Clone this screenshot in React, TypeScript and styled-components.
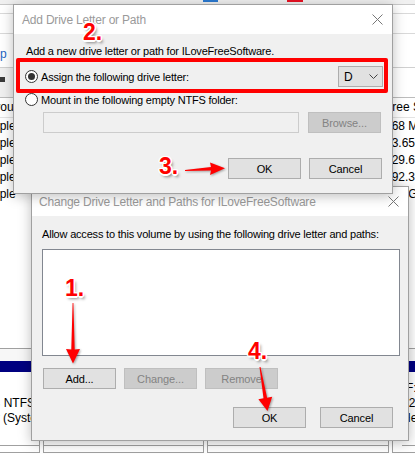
import React from "react";
import styled, { createGlobalStyle } from "styled-components";

const Global = createGlobalStyle`
  *, *::before, *::after { box-sizing: border-box; }
  html, body { margin: 0; padding: 0; background: #fff; }
  body { font-family: "Liberation Sans", Arial, sans-serif; }
`;

const Page = styled.div`
  position: relative;
  width: 415px;
  height: 454px;
  overflow: hidden;
  background: #fff;
  display: flex;
  flex-direction: column;
  font-family: "Liberation Sans", Arial, sans-serif;
  font-size: 12px;
  color: #000;
`;

/* ---------- background: Disk Management window ---------- */
const ToolStrip = styled.div`
  flex: none;
  height: 5px;
  background: #f0f0f0;
  border-bottom: 1px solid #c8c8c8;
  display: flex;
  align-items: flex-start;
`;
const ToolStub = styled.span<{ $color: string; $w: number; $ml: number }>`
  width: ${(p) => p.$w}px;
  height: 2px;
  margin-left: ${(p) => p.$ml}px;
  background: ${(p) => p.$color};
`;
const MenuStrip = styled.div`
  flex: none;
  height: 9px;
  border-bottom: 1px solid #d9d9d9;
`;
const PaneA = styled.div`
  flex: none;
  height: 20px;
  border-bottom: 1px solid #d9d9d9;
`;
const PaneB = styled.div`
  flex: none;
  height: 34px;
  padding-top: 13px;
  border-bottom: 1px solid #d0d0d0;
  line-height: 15px;
  white-space: nowrap;
`;
const HelpLink = styled.span`
  margin-left: -18px;
  color: #1f66c2;
`;
const IconArea = styled.div`
  flex: none;
  height: 30px;
  display: flex;
  border-bottom: 1px solid #bcbcbc;
`;
const IconRail = styled.div`
  width: 14px;
  background: #f0f0f0;
  padding-top: 9px;
`;
const IconStub = styled.div`
  width: 5px;
  height: 5px;
  background: #3a3a3a;
`;
const Table = styled.div`
  flex: none;
  display: flex;
  flex-direction: column;
  margin-left: -21px;
`;
const TableRow = styled.div<{ $head?: boolean }>`
  display: grid;
  grid-template-columns: 406px 1fr;
  height: ${(p) => (p.$head ? 20 : 17)}px;
  line-height: ${(p) => (p.$head ? 19 : 17)}px;
  border-bottom: ${(p) => (p.$head ? "1px solid #e3e3e3" : "none")};
  white-space: nowrap;
`;
const Cell = styled.span<{ $pad?: number }>`
  padding-left: ${(p) => p.$pad ?? 0}px;
  overflow: hidden;
`;
const Filler = styled.div`
  flex: 1;
`;
const DiskArea = styled.div`
  flex: none;
  height: 106px;
  border-top: 1px solid #a0a0a0;
  display: flex;
  flex-direction: column;
`;
const DiskGap = styled.div`
  height: 12px;
  background: #f7f7f7;
`;
const NavyBar = styled.div`
  height: 11px;
  background: #000080;
`;
const PartRow = styled.div`
  flex: 1;
  display: flex;
  gap: 3px;
  margin-left: -42px;
  padding-bottom: 1px;
`;
const PartBox = styled.div<{ $w: number; $pad?: number }>`
  width: ${(p) => p.$w}px;
  flex: none;
  border: 1px solid #a0a0a0;
  border-top: none;
  display: flex;
  flex-direction: column;
  padding-top: 9px;
  padding-left: ${(p) => p.$pad ?? 0}px;
  line-height: 15px;
  white-space: nowrap;
  overflow: hidden;
`;
const PartFoot = styled.div`
  margin-top: auto;
  height: 7px;
  border-top: 1px solid #a0a0a0;
`;

/* ---------- dialogs ---------- */
const Window = styled.div<{ $x: number; $y: number; $w: number; $h: number }>`
  position: absolute;
  left: ${(p) => p.$x}px;
  top: ${(p) => p.$y}px;
  width: ${(p) => p.$w}px;
  height: ${(p) => p.$h}px;
  border: 1px solid #a0a0a0;
  box-shadow: 0 2px 12px rgba(0, 0, 0, 0.26);
  background: #f0f0f0;
  display: flex;
  flex-direction: column;
  font-size: 11px;
  letter-spacing: -0.2px;
  color: #000;
`;
const TitleBar = styled.div`
  flex: none;
  height: 29px;
  background: #fff;
  display: flex;
  align-items: center;
  justify-content: space-between;
`;
const Title = styled.span<{ $pad: number }>`
  padding-left: ${(p) => p.$pad}px;
  color: #9a9a9a;
  font-size: 12px;
  white-space: nowrap;
`;
const Close = styled.span`
  width: 30px;
  height: 29px;
  display: flex;
  align-items: center;
  justify-content: center;
`;
const Body = styled.div<{ $pad: string }>`
  flex: 1;
  padding: ${(p) => p.$pad};
  display: flex;
  flex-direction: column;
`;
const Label = styled.div<{ $ml?: number }>`
  line-height: 15px;
  height: 15px;
  margin-left: ${(p) => p.$ml ?? 0}px;
  white-space: nowrap;
`;
const Row = styled.div<{ $mt: number; $h: number; $justify?: string; $gap?: number; $pr?: number; $ml?: number }>`
  display: flex;
  align-items: center;
  margin-top: ${(p) => p.$mt}px;
  height: ${(p) => p.$h}px;
  justify-content: ${(p) => p.$justify ?? "flex-start"};
  gap: ${(p) => p.$gap ?? 0}px;
  padding-right: ${(p) => p.$pr ?? 0}px;
  margin-left: ${(p) => p.$ml ?? 0}px;
  white-space: nowrap;
`;
const Radio = styled.span<{ $checked?: boolean }>`
  flex: none;
  width: 13px;
  height: 13px;
  border-radius: 50%;
  border: 1px solid #333;
  background: #fff;
  margin-right: 3px;
  display: flex;
  align-items: center;
  justify-content: center;
  &::after {
    content: "";
    width: 7px;
    height: 7px;
    border-radius: 50%;
    background: #333;
    display: ${(p) => (p.$checked ? "block" : "none")};
  }
`;
const Combo = styled.div`
  margin-left: auto;
  margin-right: -1px;
  width: 45px;
  height: 21px;
  border: 1px solid #adadad;
  background: #e1e1e1;
  display: flex;
  align-items: center;
  justify-content: space-between;
  padding: 0 4px 0 5px;
  font-size: 12px;
`;
const Field = styled.div`
  width: 256px;
  height: 21px;
  margin-left: 18px;
  border: 1px solid #cccccc;
  background: #f0f0f0;
`;
const Button = styled.button`
  width: 73px;
  height: 21px;
  padding: 0;
  border: 1px solid #adadad;
  background: #e1e1e1;
  color: #000;
  font: inherit;
  font-size: 11px;
  letter-spacing: -0.1px;
  &:disabled {
    border-color: #bfbfbf;
    background: #cccccc;
    color: #838383;
  }
`;
const ListBox = styled.div`
  margin-top: 7px;
  height: 107px;
  border: 1px solid #828790;
  background: #fff;
`;

/* ---------- annotations ---------- */
const Highlight = styled.div`
  position: absolute;
  left: 16px;
  top: 58px;
  width: 372px;
  height: 35px;
  border: 4px solid #ff0000;
  border-radius: 2px;
`;
const Overlay = styled.svg`
  position: absolute;
  left: 0;
  top: 0;
  width: 415px;
  height: 454px;
  pointer-events: none;
  filter: drop-shadow(1px 1px 1px rgba(0, 0, 0, 0.35));
`;
const Step = styled.span<{ $x: number; $y: number }>`
  position: absolute;
  left: ${(p) => p.$x}px;
  top: ${(p) => p.$y}px;
  font-family: "Liberation Sans", Arial, sans-serif;
  font-weight: bold;
  font-size: 23px;
  line-height: 23px;
  color: #ff0000;
  text-shadow: -1.5px 0 0 #fff, 1.5px 0 0 #fff, 0 -1.5px 0 #fff, 0 1.5px 0 #fff,
    -1px -1px 0 #fff, 1px -1px 0 #fff, -1px 1px 0 #fff, 1px 1px 0 #fff,
    2px 3px 3px rgba(0, 0, 0, 0.45);
`;

const CloseIcon = () => (
  <svg width="11" height="11" viewBox="0 0 11 11">
    <path d="M0.5 0.5 L10.5 10.5 M10.5 0.5 L0.5 10.5" stroke="#777" strokeWidth="1" fill="none" />
  </svg>
);

const Chevron = () => (
  <svg width="9" height="5" viewBox="0 0 9 5">
    <polyline points="0.5,0.5 4.5,4.5 8.5,0.5" stroke="#444" strokeWidth="1" fill="none" />
  </svg>
);

const volumes: [string, string][] = [
  ["Simple", "568 MB"],
  ["Simple", "63.65 GB"],
  ["Simple", "129.67 GB"],
  ["Simple", "192.39 GB"],
  ["Simple", "100 GB"],
];

export default function App() {
  return (
    <>
      <Global />
      <Page>
        <ToolStrip>
          <ToolStub $color="#2b79d0" $w={15} $ml={203} />
          <ToolStub $color="#e81123" $w={16} $ml={69} />
        </ToolStrip>
        <MenuStrip />
        <PaneA />
        <PaneB>
          <HelpLink>Help</HelpLink>
        </PaneB>
        <IconArea>
          <IconRail>
            <IconStub />
          </IconRail>
        </IconArea>
        <Table>
          <TableRow $head>
            <Cell $pad={2}>Layout</Cell>
            <Cell>Free Space</Cell>
          </TableRow>
          {volumes.map(([layout, free], i) => (
            <TableRow key={i}>
              <Cell>{layout}</Cell>
              <Cell>{free}</Cell>
            </TableRow>
          ))}
        </Table>
        <Filler />
        <DiskArea>
          <DiskGap />
          <NavyBar />
          <PartRow>
            <PartBox $w={82}>
              <span>&nbsp;</span>
              <span>500 MB NTFS</span>
              <span>Healthy (System, Active, Primary Partition)</span>
              <PartFoot />
            </PartBox>
            <PartBox $w={161}>
              <PartFoot />
            </PartBox>
            <PartBox $w={182}>
              <PartFoot />
            </PartBox>
            <PartBox $w={60} $pad={9}>
              <span>(F:)</span>
              <span>12 GB NTFS</span>
              <span>Healthy (Primary Partition)</span>
              <PartFoot />
            </PartBox>
          </PartRow>
        </DiskArea>

        <Window $x={31} $y={186} $w={378} $h={255}>
          <TitleBar>
            <Title $pad={7}>Change Drive Letter and Paths for ILoveFreeSoftware</Title>
            <Close>
              <CloseIcon />
            </Close>
          </TitleBar>
          <Body $pad="11px 8px 0 10px">
            <Label>Allow access to this volume by using the following drive letter and paths:</Label>
            <ListBox />
            <Row $mt={12} $h={21} $gap={8} $ml={1}>
              <Button>Add...</Button>
              <Button disabled>Change...</Button>
              <Button disabled>Remove</Button>
            </Row>
            <Row $mt={18} $h={21} $gap={14} $justify="flex-end" $pr={7}>
              <Button>OK</Button>
              <Button>Cancel</Button>
            </Row>
          </Body>
        </Window>

        <Window $x={13} $y={4} $w={380} $h={190}>
          <TitleBar>
            <Title $pad={8}>Add Drive Letter or Path</Title>
            <Close>
              <CloseIcon />
            </Close>
          </TitleBar>
          <Body $pad="10px 10px 0 11px">
            <Label $ml={1}>Add a new drive letter or path for ILoveFreeSoftware.</Label>
            <Row $mt={7} $h={21}>
              <Radio $checked />
              <span>Assign the following drive letter:</span>
              <Combo>
                <span>D</span>
                <Chevron />
              </Combo>
            </Row>
            <Row $mt={5} $h={15}>
              <Radio />
              <span>Mount in the following empty NTFS folder:</span>
            </Row>
            <Row $mt={5} $h={21} $gap={9}>
              <Field />
              <Button disabled>Browse...</Button>
            </Row>
            <Row $mt={25} $h={21} $gap={8} $justify="flex-end">
              <Button>OK</Button>
              <Button>Cancel</Button>
            </Row>
          </Body>
        </Window>

        <Highlight />
        <Overlay viewBox="0 0 415 454">
          <polygon
            fill="#ff0000"
            points="185,170 211,167 210,162.5 225,168.3 210,175 211,170.6 185,171.1"
          />
          <polygon
            fill="#ff0000"
            points="72.6,303 71.3,349.5 66,349 73,363.5 80,349 74.7,349.5 73.4,303"
          />
          <polygon
            fill="#ff0000"
            points="259.5,367 263.5,398.3 258.4,399.2 267.5,411 272.2,396.8 267.1,397.7 260.5,366.9"
          />
        </Overlay>
        <Step $x={83} $y={21}>2.</Step>
        <Step $x={159} $y={155}>3.</Step>
        <Step $x={65} $y={277}>1.</Step>
        <Step $x={248} $y={340}>4.</Step>
      </Page>
    </>
  );
}
